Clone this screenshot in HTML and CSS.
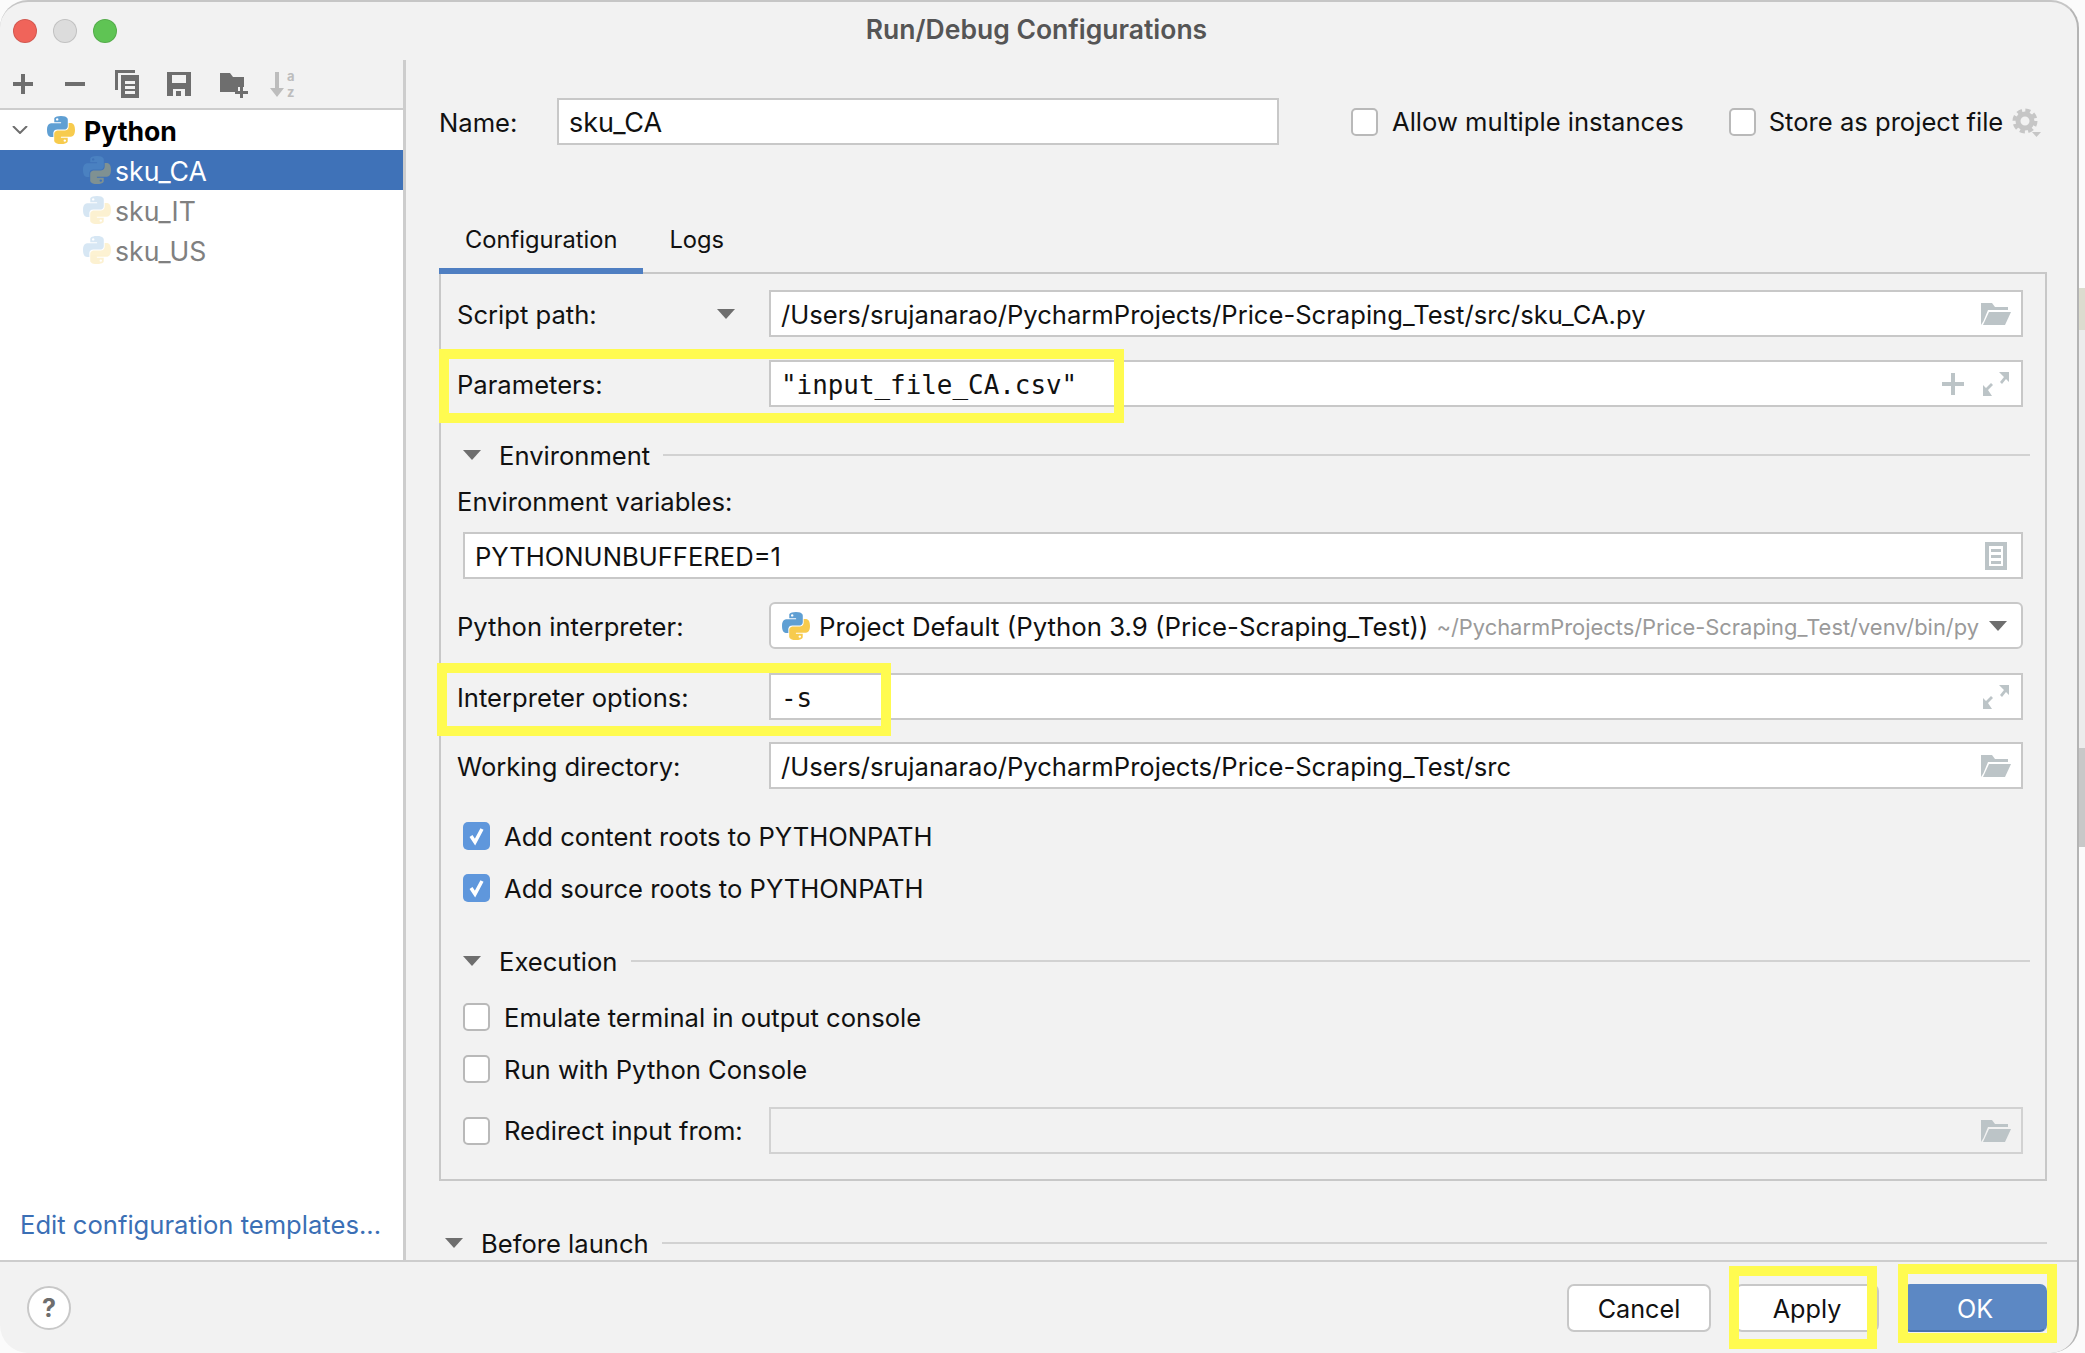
FILE: index.html
```html
<!DOCTYPE html>
<html lang="en">
<head>
    <meta charset="UTF-8">
    <title>Run/Debug Configurations</title>
    <link rel="stylesheet" href="styles.css">
</head>
<body>
<svg class="defs" width="0" height="0">
    <symbol id="py" viewBox="0 0 110 110">
        <path fill="#5f9fd3" d="M54.9 0C26.8 0 28.6 12.2 28.6 12.2v12.6h26.8v3.8H17.9S0 26.6 0 54.9s15.6 27.3 15.6 27.3h9.3V69s-.5-15.6 15.4-15.6h26.5s14.9.2 14.9-14.4V14.9S83.9 0 54.9 0zM40.1 8.5a4.8 4.8 0 1 1 0 9.6 4.8 4.8 0 0 1 0-9.6z"/>
        <path fill="#f7cb4d" transform="rotate(180 55 55)" d="M54.9 0C26.8 0 28.6 12.2 28.6 12.2v12.6h26.8v3.8H17.9S0 26.6 0 54.9s15.6 27.3 15.6 27.3h9.3V69s-.5-15.6 15.4-15.6h26.5s14.9.2 14.9-14.4V14.9S83.9 0 54.9 0zM40.1 8.5a4.8 4.8 0 1 1 0 9.6 4.8 4.8 0 0 1 0-9.6z"/>
    </symbol>
    <symbol id="folder" viewBox="0 0 30 22">
        <path fill="#bcc4c7" d="M0 0h11l3 4h13v3H7L2.500 18 0 22z"/>
        <path fill="#bcc4c7" d="M8 9h22l-6 13H2z"/>
    </symbol>
    <symbol id="expand" viewBox="0 0 26 24">
        <path fill="#bcc4c7" d="M16 0h10v10l-3-3-4 5-2-2 4-5zM0 24V13l3 3 5-5 2 2-5 5 4 6z"/>
    </symbol>
    <symbol id="check" viewBox="0 0 27 28">
        <path fill="none" stroke="#fff" stroke-width="3.500" d="M8 14l4 6 7-13"/>
    </symbol>
</svg>

<div class="window">
    <div class="titlebar">
        <div class="lights">
            <span class="light red"></span>
            <span class="light grey"></span>
            <span class="light green"></span>
        </div>
        <div class="title">Run/Debug Configurations</div>
        <div></div>
    </div>

    <div class="body">
        <div class="sidebar">
            <div class="toolbar">
                <svg class="tool" viewBox="0 0 28 28"><path fill="#6e6e6e" d="M12 4h4v8h8v4h-8v8h-4v-8H4v-4h8z"/></svg>
                <svg class="tool" viewBox="0 0 28 28"><path fill="#6e6e6e" d="M4 12h20v4H4z"/></svg>
                <svg class="tool" viewBox="0 0 28 28"><path fill="#6e6e6e" d="M2 0h20v3H5v17H2zM8 5h18v23H8zm4 6v3h10v-3zm0 5v3h10v-3zm0 5v3h10v-3z" fill-rule="evenodd"/></svg>
                <svg class="tool" viewBox="0 0 28 28"><path fill="#6e6e6e" fill-rule="evenodd" d="M2 2h24v24H2zm5 3v8h14V5zm1 21h12v-7H8zm3-5h5v5h-5z"/></svg>
                <svg class="tool tool-folder" viewBox="0 0 28 28"><path fill="#6e6e6e" d="M0 3h10l3 4h11v10h-6v5H0z"/><path fill="#6e6e6e" d="M20 17h3v4h5v3h-5v4h-3v-4h-5v-3h5z"/></svg>
                <svg class="tool tool-sort" viewBox="0 -6 28 40">
                    <path fill="#bdbdbd" d="M6 2h4v16h5l-7 9-7-9h5z"/>
                    <text x="18" y="10.500" class="sort-letter">a</text>
                    <text x="18" y="26.500" class="sort-letter">z</text>
                </svg>
            </div>
            <div class="tree">
                <div class="tree-row group">
                    <svg class="chevron" viewBox="0 0 16 8"><path fill="none" stroke="#6e6e6e" stroke-width="2" d="M1 0l7 7 7-7"/></svg>
                    <svg class="py-icon"><use href="#py"/></svg>
                    <span>Python</span>
                </div>
                <div class="tree-row child selected">
                    <svg class="py-icon dim"><use href="#py"/></svg>
                    <span>sku_CA</span>
                </div>
                <div class="tree-row child">
                    <svg class="py-icon faded"><use href="#py"/></svg>
                    <span>sku_IT</span>
                </div>
                <div class="tree-row child">
                    <svg class="py-icon faded"><use href="#py"/></svg>
                    <span>sku_US</span>
                </div>
                <a class="templates">Edit configuration templates...</a>
            </div>
        </div>

        <div class="main">
            <div class="name-row">
                <label class="name-label">Name:</label>
                <div class="field name-field"><span class="field-text">sku_CA</span></div>
                <div class="check-item allow"><span class="checkbox"></span>Allow multiple instances</div>
                <div class="check-item store"><span class="checkbox"></span>Store as project file</div>
                <svg class="gear" viewBox="0 0 30 30">
                    <circle cx="13" cy="13" r="7" fill="none" stroke="#c6c6c6" stroke-width="5"/>
                    <circle cx="13" cy="13" r="10.500" fill="none" stroke="#c6c6c6" stroke-width="4" stroke-dasharray="5 3.250"/>
                    <path fill="#c6c6c6" d="M20 24h9l-4.500 5z"/>
                </svg>
            </div>

            <div class="tabs">
                <div class="tab active">Configuration</div>
                <div class="tab">Logs</div>
            </div>

            <div class="panel">
                <div class="row">
                    <label class="row-label with-arrow">Script path:<span class="tri"></span></label>
                    <div class="field grow">
                        <span class="field-text">/Users/srujanarao/PycharmProjects/Price-Scraping_Test/src/sku_CA.py</span>
                        <svg class="ic-folder"><use href="#folder"/></svg>
                    </div>
                </div>
                <div class="row gap-23">
                    <label class="row-label">Parameters:</label>
                    <div class="field grow">
                        <span class="field-text mono">"input_file_CA.csv"</span>
                        <svg class="ic-plus" viewBox="0 0 22 22"><path fill="#bcc4c7" d="M9 0h4v9h9v4h-9v9H9v-9H0V9h9z"/></svg>
                        <svg class="ic-expand"><use href="#expand"/></svg>
                    </div>
                </div>

                <div class="section env">
                    <span class="tri"></span>
                    <span class="section-name">Environment</span>
                    <span class="section-line"></span>
                </div>
                <div class="sub-label">Environment variables:</div>
                <div class="row env-row">
                    <div class="field grow">
                        <span class="field-text">PYTHONUNBUFFERED=1</span>
                        <svg class="ic-doc" viewBox="0 0 22 28"><path fill="#bcc4c7" fill-rule="evenodd" d="M0 0h22v28H0zm4 4v20h14V4zm2 3h10v3H6zm0 6h10v3H6zm0 6h10v3H6z"/></svg>
                    </div>
                </div>
                <div class="row gap-23">
                    <label class="row-label">Python interpreter:</label>
                    <div class="field grow combo">
                        <svg class="py-icon combo-icon"><use href="#py"/></svg>
                        <span class="combo-text">Project Default (Python 3.9 (Price-Scraping_Test))</span>
                        <span class="combo-path">~/PycharmProjects/Price-Scraping_Test/venv/bin/py</span>
                        <span class="tri combo-arrow"></span>
                    </div>
                </div>
                <div class="row gap-24">
                    <label class="row-label">Interpreter options:</label>
                    <div class="field grow">
                        <span class="field-text mono">-s</span>
                        <svg class="ic-expand"><use href="#expand"/></svg>
                    </div>
                </div>
                <div class="row gap-22">
                    <label class="row-label">Working directory:</label>
                    <div class="field grow">
                        <span class="field-text">/Users/srujanarao/PycharmProjects/Price-Scraping_Test/src</span>
                        <svg class="ic-folder"><use href="#folder"/></svg>
                    </div>
                </div>

                <div class="check-item block first-check">
                    <span class="checkbox checked"><svg viewBox="0 0 27 28"><use href="#check"/></svg></span>Add content roots to PYTHONPATH
                </div>
                <div class="check-item block">
                    <span class="checkbox checked"><svg viewBox="0 0 27 28"><use href="#check"/></svg></span>Add source roots to PYTHONPATH
                </div>

                <div class="section exec">
                    <span class="tri"></span>
                    <span class="section-name">Execution</span>
                    <span class="section-line"></span>
                </div>
                <div class="check-item block exec-check">
                    <span class="checkbox"></span>Emulate terminal in output console
                </div>
                <div class="check-item block">
                    <span class="checkbox"></span>Run with Python Console
                </div>
                <div class="row gap-24 redirect">
                    <div class="check-item redirect-label"><span class="checkbox"></span>Redirect input from:</div>
                    <div class="field grow disabled">
                        <span class="field-text"></span>
                        <svg class="ic-folder"><use href="#folder"/></svg>
                    </div>
                </div>
            </div>

            <div class="section before">
                <span class="tri"></span>
                <span class="section-name">Before launch</span>
                <span class="section-line"></span>
            </div>
        </div>
    </div>

    <div class="footer">
        <div class="help">?</div>
        <div class="buttons">
            <button class="btn">Cancel</button>
            <button class="btn">Apply</button>
            <button class="btn primary">OK</button>
        </div>
    </div>

    <!-- yellow marker boxes drawn on top of the screenshot -->
    <div class="mark mark-params"></div>
    <div class="mark mark-options"></div>
    <div class="mark mark-apply"></div>
    <div class="mark mark-ok"></div>
</div>
</body>
</html>
```

FILE: styles.css
```css
/* CSS styles */
body {
    margin: 0;
    /* the edge of whatever sits behind the dialog */
    background: linear-gradient(#fbfbfb 288px, #dcdccf 288px, #dcdccf 330px, #ececec 330px, #ececec 748px, #c8c8c8 748px, #c8c8c8 847px, #fbfbfb 847px);
    font-family: Inter, "Liberation Sans", sans-serif;
    font-size: 25.600px;
    color: #111;
    width: 2085px;
    height: 1353px;
    overflow: hidden;
}
.defs {
    position: absolute;
}
.window {
    position: relative;
    box-sizing: border-box;
    width: 2079px;
    height: 1353px;
    background-color: #f2f2f2;
    border: solid #b4b4b4;
    border-width: 2px 2px 0 0;
    border-top-color: #c6c6c6;
    border-radius: 28px;
    overflow: hidden;
    display: flex;
    flex-direction: column;
}

/* title bar */
.titlebar {
    height: 58px;
    display: grid;
    grid-template-columns: 1fr auto 1fr;
    align-items: center;
    padding-right: 4px;
    flex: none;
}
.lights {
    display: flex;
    gap: 16px;
    padding-left: 13px;
}
.light {
    width: 24px;
    height: 24px;
    border-radius: 50%;
    box-sizing: border-box;
    border: 1px solid rgba(0, 0, 0, 0.12);
}
.red { background-color: #f0645a; }
.grey { background-color: #dcdcdc; }
.green { background-color: #5fc454; }
.title {
    font-size: 26.500px;
    font-weight: 600;
    color: #555;
    margin-bottom: 5px;
}

/* left tree */
.body {
    display: flex;
    flex: 1;
    min-height: 0;
}
.sidebar {
    width: 403px;
    flex: none;
    border-right: 3px solid #cdcdcd;
    display: flex;
    flex-direction: column;
}
.toolbar {
    flex: none;
    box-sizing: border-box;
    border-bottom: 2px solid #cdcdcd;
    height: 50px;
    display: flex;
    align-items: center;
    gap: 24px;
    padding-left: 9px;
}
.tool {
    width: 28px;
    height: 28px;
}
.tool-folder {
    margin-left: 3px;
}
.tool-sort {
    height: 40px;
    margin-left: -3px;
}
.sort-letter {
    font-size: 13px;
    font-weight: 700;
    fill: #bdbdbd;
}
.tree {
    flex: 1;
    background-color: #fff;
    display: flex;
    flex-direction: column;
    font-size: 26.600px;
}
.tree-row {
    height: 40px;
    display: flex;
    align-items: center;
    color: #808080;
}
.tree-row span {
    padding-top: 1px;
}
.group {
    color: #000;
    font-weight: 700;
    padding-left: 12px;
}
.child {
    padding-left: 83px;
}
.selected {
    background-color: #3f72b8;
    color: #fff;
}
.chevron {
    width: 16px;
    height: 8px;
    margin-right: 19px;
}
.py-icon {
    width: 28px;
    height: 28px;
    margin-right: 9px;
    flex: none;
}
.child .py-icon {
    margin-right: 4px;
}
.faded { opacity: 0.25; }
.dim { opacity: 0.35; }
.templates {
    margin-top: auto;
    margin-bottom: 20px;
    padding-left: 20px;
    font-size: 25.600px;
    color: #3b6fb5;
}

/* right side */
.main {
    flex: 1;
    min-width: 0;
    padding: 38px 30px 0 33px;
    overflow: hidden;
}
.name-row {
    display: flex;
    align-items: center;
    height: 47px;
}
.name-label {
    width: 118px;
    padding-top: 2px;
}
.name-field {
    width: 722px;
    flex: none;
    font-size: 27px;
}
.field {
    box-sizing: border-box;
    height: 47px;
    background-color: #fff;
    border: 2px solid #c8c8c8;
    display: flex;
    align-items: center;
    padding: 0 10px;
}
.grow {
    flex: 1;
    min-width: 0;
}
.field-text {
    flex: 1;
    white-space: nowrap;
    padding-top: 2px;
}
.mono {
    font-family: "DejaVu Sans Mono", "Liberation Mono", monospace;
    font-size: 25.900px;
}
.check-item {
    display: flex;
    align-items: center;
    white-space: nowrap;
}
.checkbox {
    box-sizing: border-box;
    width: 27px;
    height: 28px;
    border: 2px solid #b9b9b9;
    border-radius: 5px;
    background-color: #fff;
    margin-right: 14px;
    flex: none;
}
.checked {
    background-color: #5f97dc;
    border: none;
}
.checked svg {
    display: block;
    width: 27px;
    height: 28px;
}
.allow {
    margin-left: 72px;
}
.store {
    margin-left: 45px;
}
.store .checkbox {
    margin-right: 13px;
}
.gear {
    width: 30px;
    height: 30px;
    margin-left: 9px;
    margin-top: 2px;
    flex: none;
}

/* tabs */
.tabs {
    display: flex;
    margin-top: 61px;
    height: 68px;
    position: relative;
    z-index: 1;
}
.tab {
    box-sizing: border-box;
    height: 68px;
    padding: 4px 26px 0;
    display: flex;
    align-items: center;
    border-bottom: 6px solid transparent;
    font-size: 23.700px;
}
.tab.active {
    border-bottom-color: #4f7fc2;
}
.panel {
    box-sizing: border-box;
    height: 909px;
    margin-top: -2px;
    border: 2px solid #c8c8c8;
    padding: 16px 22px 0 16px;
}
.row {
    display: flex;
    align-items: center;
}
.row-label {
    width: 312px;
    flex: none;
    white-space: nowrap;
    padding-top: 1px;
}
.with-arrow {
    box-sizing: border-box;
    display: flex;
    align-items: center;
    justify-content: space-between;
    padding-right: 34px;
}
.gap-22 { margin-top: 22px; }
.gap-23 { margin-top: 23px; }
.gap-24 { margin-top: 24px; }
.tri {
    display: inline-block;
    width: 0;
    height: 0;
    border-left: 9px solid transparent;
    border-right: 9px solid transparent;
    border-top: 10px solid #6e6e6e;
    flex: none;
}
.section {
    display: flex;
    align-items: center;
    height: 24px;
}
.section .tri {
    margin-left: 6px;
}
.section-name {
    margin-left: 18px;
    margin-right: 13px;
    white-space: nowrap;
}
.section-line {
    flex: 1;
    height: 2px;
    background-color: #d2d2d2;
}
.env {
    margin-top: 36px;
    margin-right: -7px;
}
.exec {
    margin-top: 47px;
    margin-right: -7px;
}
.before {
    margin-top: 50px;
}
.sub-label {
    margin-top: 19px;
    height: 30px;
    line-height: 32px;
}
.env-row {
    margin-top: 16px;
    margin-left: 6px;
}
.combo {
    border-radius: 6px;
    padding-left: 11px;
}
.combo-icon {
    margin-right: 9px;
}
.combo-text {
    white-space: nowrap;
    padding-top: 2px;
    font-size: 25.800px;
}
.combo-path {
    flex: 1;
    margin-left: 8px;
    padding-top: 2px;
    font-size: 21.900px;
    color: #9a9a9a;
    white-space: nowrap;
}
.combo-arrow {
    margin-right: 4px;
}
.ic-folder {
    width: 30px;
    height: 22px;
    flex: none;
}
.ic-plus {
    width: 22px;
    height: 22px;
    margin-right: 19px;
    flex: none;
}
.ic-expand {
    width: 26px;
    height: 24px;
    margin-right: 2px;
    flex: none;
}
.ic-doc {
    width: 22px;
    height: 28px;
    margin-right: 4px;
    flex: none;
}
.block {
    margin-left: 6px;
    height: 28px;
    margin-top: 24px;
}
.first-check {
    margin-top: 33px;
}
.exec-check {
    margin-top: 30px;
}
.redirect-label {
    width: 306px;
    margin-left: 6px;
    flex: none;
}
.disabled {
    background-color: #f2f2f2;
    border-color: #d2d2d2;
}

/* footer */
.footer {
    flex: none;
    box-sizing: border-box;
    height: 93px;
    border-top: 2px solid #cdcdcd;
    display: flex;
    justify-content: space-between;
    align-items: flex-start;
    padding: 22px 30px 0 27px;
}
.help {
    box-sizing: border-box;
    width: 44px;
    height: 44px;
    margin-top: 2px;
    border: 2px solid #c8c8c8;
    border-radius: 50%;
    background-color: #fff;
    color: #6e6e6e;
    font-weight: 700;
    text-align: center;
    line-height: 40px;
    font-size: 25px;
}
.buttons {
    display: flex;
    gap: 24px;
}
.btn {
    box-sizing: border-box;
    width: 144px;
    height: 48px;
    background-color: #fff;
    border: 2px solid #c8c8c8;
    border-radius: 7px;
    font-family: inherit;
    font-size: 25.200px;
    color: #111;
    padding: 1px 0 0;
}
.primary {
    background-color: #5c88c4;
    border-color: #5c88c4;
    border-bottom-color: #4a72ad;
    color: #fff;
}

/* marker boxes */
.mark {
    position: absolute;
    box-sizing: border-box;
    border: 10px solid #fffb50;
}
.mark-params {
    left: 439px;
    top: 347px;
    width: 685px;
    height: 74px;
}
.mark-options {
    left: 437px;
    top: 661px;
    width: 454px;
    height: 73px;
}
.mark-apply {
    left: 1729px;
    top: 1264px;
    width: 148px;
    height: 83px;
}
.mark-ok {
    left: 1898px;
    top: 1262px;
    width: 159px;
    height: 79px;
}
```
